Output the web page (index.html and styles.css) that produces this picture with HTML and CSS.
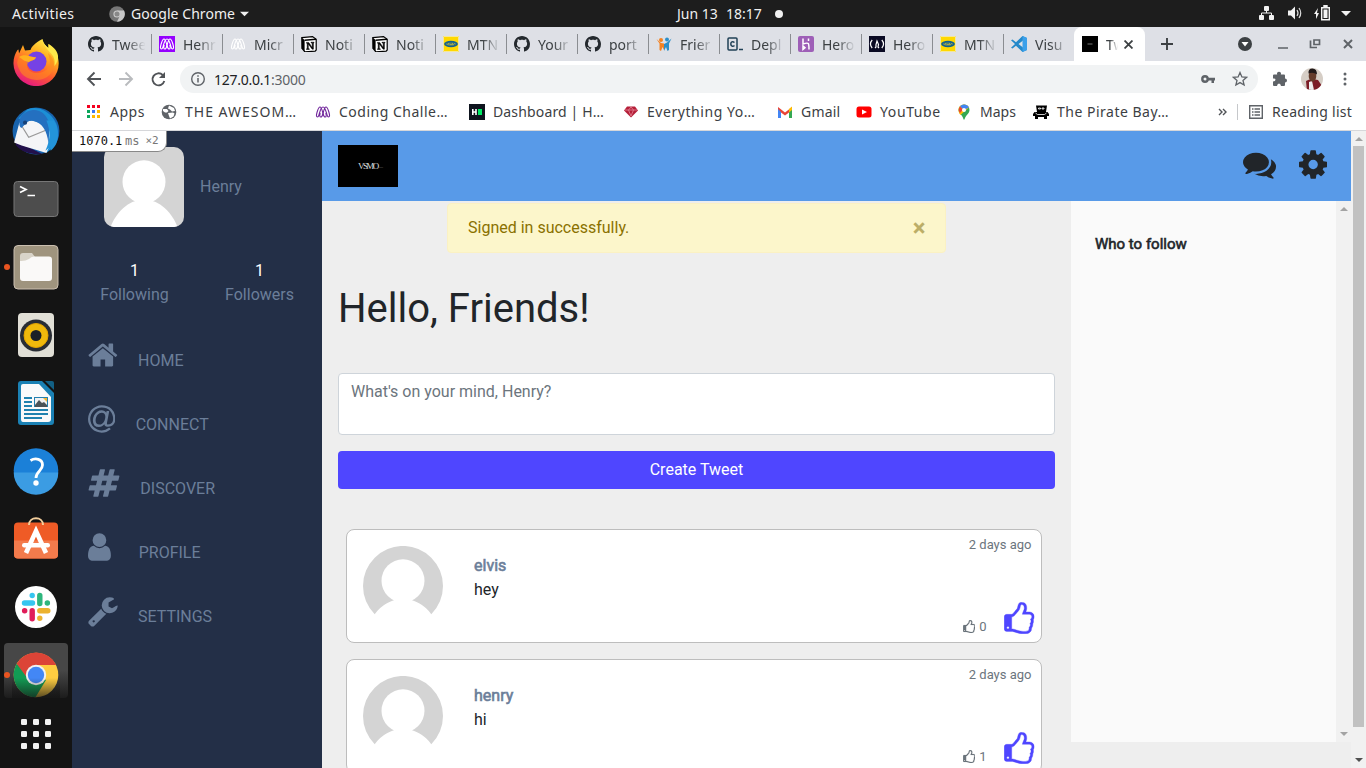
FILE: index.html
```html
<!DOCTYPE html>
<html lang="en">
<head>
<meta charset="utf-8">
<title>Tweets</title>
<link rel="stylesheet" href="styles.css">
</head>
<body>
<svg class="defs" aria-hidden="true">
  <symbol id="gh" viewBox="0 0 16 16"><path d="M8 0C3.58 0 0 3.58 0 8c0 3.54 2.29 6.53 5.47 7.59.4.07.55-.17.55-.38 0-.19-.01-.82-.01-1.49-2.01.37-2.53-.49-2.69-.94-.09-.23-.48-.94-.82-1.13-.28-.15-.68-.52-.01-.53.63-.01 1.08.58 1.23.82.72 1.21 1.87.87 2.33.66.07-.52.28-.87.51-1.07-1.78-.2-3.64-.89-3.64-3.95 0-.87.31-1.59.82-2.15-.08-.2-.36-1.02.08-2.12 0 0 .67-.21 2.2.82.64-.18 1.32-.27 2-.27s1.36.09 2 .27c1.53-1.04 2.2-.82 2.2-.82.44 1.1.16 1.92.08 2.12.51.56.82 1.27.82 2.15 0 3.07-1.87 3.75-3.65 3.95.29.25.54.73.54 1.48 0 1.07-.01 1.93-.01 2.2 0 .21.15.46.55.38A8.01 8.01 0 0 0 16 8c0-4.42-3.58-8-8-8z" fill="#24292e"/></symbol>
  <symbol id="micro" viewBox="0 0 16 16"><g fill="none" stroke="currentColor" stroke-width="1.100"><path d="M5 3C3.500 3 2.800 6 2 8.500c-.8 2.500-.8 4.500.5 4.500s1.300-1.500 2-4S6.300 3 8 3s2.800 3.500 3.500 6 .7 4 2 4 1.300-2 .5-4.500S12.500 3 11 3 8.800 6.500 8 9.500 7 13 5.800 13s-1.300-1.500-.6-4"/><path d="M5 3c1.500 0 2.200 3.500 3 6.500s1 3.500 2.200 3.500 1.300-1.500.6-4"/></g></symbol>
  <symbol id="notion" viewBox="0 0 16 16"><path d="M.8 1.600 11.500.6l3.700 2.600V14l-1 1.200-10.400.6L1 12.300z" fill="#fff" stroke="#000" stroke-width="1.200"/><path d="M.8 1.800 3.600 4v11.400L.8 12.300z"/><path d="M3.600 4.200 15 3.300" stroke="#000" stroke-width="1.400"/><path d="M5.500 6.400h2.200l3.500 5V7H10v-.8h3V7l-.6.200v6h-1.200L7.300 7.900v4.600l1 .3v.7H5.500v-.7l.7-.3V7.400l-.7-.2z" stroke="#000" stroke-width=".5"/></symbol>
  <symbol id="mtn" viewBox="0 0 16 16"><path fill="#ffd800" d="M0 0h16v16H0z"/><path fill="none" stroke="#f4e79a" d="M.5.5h15v15H.5z"/><ellipse cx="8" cy="8" rx="6.900" ry="3.300" fill="#12618f"/><ellipse cx="8" cy="8" rx="4.800" ry="1.300" fill="#e9c92a"/><path d="M4 8.800v-1.500l1.200 1 1.200-1v1.500M7 7.200h2m-1 0v1.600m2 0V7.200l2 1.600V7.200" stroke="#12618f" stroke-width=".8" fill="none"/></symbol>
  <symbol id="thumb" viewBox="-10 118 1556 1684" preserveAspectRatio="none"><path fill="currentColor" stroke="currentColor" stroke-width="18" d="M256 1472q0-26-19-45t-45-19-45 19-19 45 19 45 45 19 45-19 19-45zm1152-576q0-51-39-89.500t-89-38.500h-352q0-58 48-159.500t48-160.500q0-98-32-145t-128-47q-26 26-38 85t-30.500 125.500-59.500 109.500q-22 23-77 91-4 5-23 30t-31.500 41-34.500 42.500-40 44-38.500 35.500-40 27-35.500 9h-32v640h32q13 0 31.500 3t33 6.500 38 11 35 11.500 35.500 12.500 29 10.500q211 73 342 73h121q192 0 192-167 0-26-5-56 30-16 47.500-52.500t17.500-73.500-18-69q53-50 53-119 0-25-10-55.500t-25-47.500q32-1 53.500-47t21.500-81zm128-1q0 89-49 163 9 33 9 69 0 77-38 144 3 21 3 43 0 101-60 178 1 139-85 219.500t-227 80.500h-129q-96 0-189.500-22.500t-216.500-65.500q-116-40-138-40h-288q-53 0-90.500-37.500t-37.500-90.500v-640q0-53 37.500-90.500t90.500-37.500h274q36-24 137-155 58-75 107-128 24-25 35.500-85.500t30.500-126.500 62-108q39-37 90-37 84 0 151 32.500t102 101.500 35 186q0 93-48 192h176q104 0 180 76t76 179z"/></symbol>
  <symbol id="person" viewBox="0 0 80 80"><path fill="#d4d4d4" d="M0 0h80v80H0z"/><circle cx="40" cy="34.800" r="21.500" fill="#fff"/><path d="M6.500 80C14 61 28 52.500 40 52.500S66 61 73.500 80z" fill="#fff"/></symbol>
  <symbol id="person-round" viewBox="0 0 80 80"><path fill="#d4d4d4" d="M11.700 68.200A40 40 0 1 1 68.300 68.200Q58 54 40 52.500 22 54 11.700 68.200z"/><circle cx="40" cy="34.800" r="21.500" fill="#fff"/></symbol>
</svg>

<header class="topbar">
  <span class="activities">Activities</span>
  <svg class="appicon" viewBox="0 0 16 16"><circle cx="8" cy="8" r="7.800" fill="#777"/><path d="M8 4.500h7A7.800 7.800 0 0 1 8 15.800L11 9.500z" fill="#c8c8c8"/><circle cx="8" cy="8" r="3.600" fill="#ccc"/><circle cx="8" cy="8" r="2.500" fill="#888"/></svg>
  <span class="appname">Google Chrome</span>
  <svg class="caret" viewBox="0 0 10 6"><path d="M0 .5h10L5 5.500z" fill="#f0f0f0"/></svg>
  <span class="clock"><span>Jun 13</span><span>18:17</span><i class="dot"></i></span>
  <svg class="tray" viewBox="0 0 94 18" fill="#f2f2f2"><rect x="6" y="1" width="5" height="5" rx="1"/><rect x="1" y="10" width="5" height="5" rx="1"/><rect x="11" y="10" width="5" height="5" rx="1"/><path d="M8.500 5v3m-5 3V8h10v3" fill="none" stroke="#f2f2f2"/><path d="M30 5.500h3l4-4v13l-4-4h-3z"/><path d="M39 5q2 3 0 6m2-8q3.500 5 0 10" fill="none" stroke="#ddd" stroke-width="1.200"/><path d="M60 3l-4 6h2v5l3-6h-2z"/><path d="M63.700 2.700h7.600v12h-7.600zM66 .5h3V2h-3z" fill="none" stroke="#f2f2f2" stroke-width="1.400"/><path d="M65.500 4.500h4v8.500h-4zM83 6h10l-5 5z"/></svg>
</header>

<div class="desktop">
<nav class="dock">
  <div class="dock-item first"><svg viewBox="0 0 48 48"><defs><linearGradient id="ff" x1=".8" y1="0" x2=".3" y2="1"><stop offset="0" stop-color="#fff44f"/><stop offset=".35" stop-color="#ffab1f"/><stop offset=".65" stop-color="#ff5a2f"/><stop offset="1" stop-color="#e31587"/></linearGradient></defs><path d="M30.500 1c.5 4 3 6.500 6 9.500V6c7 6 10.200 12 10.200 19A22.600 22.600 0 0 1 1.500 26c-.2-6 1.500-10 4-14l1-.5.500 4L11 7l2 5.500 5.500-.5c1-3 4-7 12-11z" fill="url(#ff)"/><circle cx="24.500" cy="23.500" r="10" fill="#7542e5"/><path d="M7 19c3-3 7-2 10-1 3 1 5 1.500 7 1-1 4-5 3-7 5-5 5 1 11 8 11 8 0 13-5 13-12l-2-8c8 6 8 18-1 24S12 41 8 33 5 24 7 19z" fill="#ff8b20" opacity=".6"/><path d="M30.500 1c0 6 5 10 9 15s3 8 3 12c7-9 3-17-6-22v4C33 7.500 31 5 30.500 1z" fill="#ffe94a"/><path d="M7 19c3-2 7-2 10-1 3 1 5 1.500 7 1-1 4-5 3-7 5-4 0-8-4-10-5z" fill="#ffb01f"/></svg></div>
  <div class="dock-item"><svg class="tb" viewBox="0 0 48 48"><circle cx="24" cy="24" r="22.500" fill="#1863ad"/><path d="M7 12 16 3c8-3 17 0 23 7 8 8 8 22 1 30l-6 5c2-8-2-17-14-29z" fill="#1c8fd6"/><path d="M3 32 5 38c6 7 15 9 25 8L6 34z" fill="#22104b"/><path d="M8 16 20 14l18 5v17l-4 9C24 42 12 39 3 35z" fill="#f4f5f7"/><path d="m9 17 8 13 17-7" fill="none" stroke="#999" stroke-width="1.200"/><path d="M8 16c0-7 6-11 12-12 8-1 14 4 17 13l-1 22C36 28 32 18 24 15c-4-1-6-1-8 0l-6 6c-2-1-2-3-2-5z" fill="#2470c0"/><path d="M34 14c4 10 4 19-1 29l5-4v4c10-7 8-22 3-29z" fill="#2394da"/><circle cx="13.500" cy="16" r="2" fill="#164178"/></svg></div>
  <div class="dock-item"><svg viewBox="0 0 48 48"><rect x="2" y="6.500" width="44" height="35" rx="3.500" fill="#4d4d4d" stroke="#777"/><path d="m8 11.500 6 3-6 3M15.500 20.500h7.500" fill="none" stroke="#fff" stroke-width="1.700"/></svg></div>
  <div class="dock-item running"><svg viewBox="0 0 48 48"><rect x="2" y="2.500" width="44" height="43.500" rx="4" fill="#9f947e" stroke="#cbbfb0"/><path d="M8 13q0-3 3-3h9l3 4h14v7H8z" fill="#d9d4c9"/><path d="M8 18q5 .5 9-2 2-2.500 5-2.500h15q3 0 3 3V35q0 3-3 3H11q-3 0-3-3z" fill="#faf9f8"/></svg></div>
  <div class="dock-item"><svg viewBox="0 0 48 48"><rect x="6" y="2" width="36" height="44" rx="4" fill="#e1dfd6"/><circle cx="24" cy="24.500" r="16" fill="#292d34"/><circle cx="24" cy="24.500" r="12" fill="#f0b90c" stroke="#e4a400"/><circle cx="24" cy="24.500" r="5.500" fill="#1b2027"/></svg></div>
  <div class="dock-item"><svg viewBox="0 0 48 48"><path d="M9 2h21l12 12v29q0 3-3 3H9q-3 0-3-3V5q0-3 3-3z" fill="#1b81b4"/><path d="M33 2h7q2 0 2 2v7z" fill="#126085"/><path d="M11 5h16l12 13v22q0 3-3 3H11q-2 0-2-3V7q0-2 2-2z" fill="#fafafa"/><path d="M12 19h8m-8 4h8m-8 4h8m-8 4h24m-24 4h24m-24 4h18" stroke="#2082af" stroke-width="1.800"/><path fill="#2380b0" d="M22 18h14v10H22z"/><path fill="#f1f1f1" d="M23 19h12v8H23z"/><path d="m23 26 4-5 3 3 2-1 3 3v2H23z" fill="#4a5358"/><path fill="#f2b632" d="M31 19h4v4z"/></svg></div>
  <div class="dock-item"><svg viewBox="0 0 48 48"><circle cx="24" cy="23.500" r="22.300" fill="#1b80d8"/><path d="M1.700 25.500h44.600A22.300 22.300 0 0 1 1.700 25.500z" fill="#3b9ce3"/><path d="M18.500 13.500c5-3 12-1.500 12 4.500 0 6-6.500 6-6.500 13" stroke="#fff" stroke-width="2.800" fill="none"/><circle cx="24" cy="36" r="2.700" fill="#fff"/></svg></div>
  <div class="dock-item"><svg viewBox="0 0 48 48"><rect x="2" y="7.500" width="44" height="36" rx="4" fill="#ef5b26"/><path d="M2 25.500h44v14q0 4-4 4H6q-4 0-4-4z" fill="#f37b4c"/><path d="M17 10c0-9 14-9 14 0" fill="none" stroke="#f4ce9b" stroke-width="2"/><path d="m14 38 10-22 10 22" fill="none" stroke="#fff" stroke-width="4.600"/><rect x="10" y="28" width="28" height="4.500" rx="2.200" fill="#fff"/></svg></div>
  <div class="dock-item"><svg viewBox="0 0 48 48"><circle cx="24" cy="24" r="21" fill="#fff"/><g stroke-width="5.400" stroke-linecap="round"><path stroke="#36c5f0" d="M12.500 20h8M20.200 12.500v.1"/><path stroke="#2eb67d" d="M27.800 12.500v8M35.300 20h.1"/><path stroke="#ecb22e" d="M27.800 27.700h8M27.800 35.200v.1"/><path stroke="#e01e5a" d="M20.200 27.700v8M12.600 27.700h.1"/></g></svg></div>
  <div class="dock-item running active"><svg viewBox="0 0 48 48"><circle cx="24" cy="24" r="22.300" fill="#ffcd41"/><path d="M24 24 4.700 12.800A22.300 22.300 0 0 0 23.500 46.300L34 29z" fill="#129c54"/><path d="M4.700 12.800A22.300 22.300 0 0 1 44.200 14H24l-8 14z" fill="#dc4437"/><circle cx="24" cy="24" r="10.200" fill="#f1f1f1"/><circle cx="24" cy="24" r="8.200" fill="#4387f5"/><path d="M0 27h48v21H0z" fill="url(#shade)"/><defs><linearGradient id="shade" x2="0" y2="1"><stop stop-color="#141414" stop-opacity="0"/><stop offset="1" stop-color="#141414" stop-opacity=".75"/></linearGradient></defs></svg></div>
  <div class="dock-item apps"><svg viewBox="0 0 48 48" fill="#f3f3f3"><rect x="9" y="9" width="6" height="6" rx="1.300"/><rect x="21" y="9" width="6" height="6" rx="1.300"/><rect x="33" y="9" width="6" height="6" rx="1.300"/><rect x="9" y="21" width="6" height="6" rx="1.300"/><rect x="21" y="21" width="6" height="6" rx="1.300"/><rect x="33" y="21" width="6" height="6" rx="1.300"/><rect x="9" y="33" width="6" height="6" rx="1.300"/><rect x="21" y="33" width="6" height="6" rx="1.300"/><rect x="33" y="33" width="6" height="6" rx="1.300"/></svg></div>
</nav>

<main class="browser">
  <div class="tabs">
    <div class="tab"><svg><use href="#gh"/></svg><span>Twee</span></div>
    <div class="tab"><svg class="purple-bg"><use href="#micro"/></svg><span>Henr</span></div>
    <div class="tab"><svg class="pale"><use href="#micro"/></svg><span>Micr</span></div>
    <div class="tab"><svg><use href="#notion"/></svg><span>Noti</span></div>
    <div class="tab"><svg><use href="#notion"/></svg><span>Noti</span></div>
    <div class="tab"><svg><use href="#mtn"/></svg><span>MTN</span></div>
    <div class="tab"><svg><use href="#gh"/></svg><span>Your</span></div>
    <div class="tab"><svg><use href="#gh"/></svg><span>port</span></div>
    <div class="tab"><svg viewBox="0 0 16 16"><circle cx="5" cy="4" r="2" fill="#f58220"/><circle cx="11" cy="3.500" r="2" fill="#2d8fc8"/><path d="m.5 3 3 4.500V14L5 15l1.500-4L8 14V7.500L5 7z" fill="#f58220"/><path d="m15.500 2.500-2.500 5V14l-1.500 1-1.500-4-2 4V8l3-1.500z" fill="#2d8fc8"/></svg><span>Frier</span></div>
    <div class="tab"><svg viewBox="0 0 16 16" fill="none" stroke="#204056" stroke-width="1.500"><rect x="1" y="2" width="9" height="12" rx="1"/><path d="M7.500 6.500C5.500 5 3.800 6 3.800 8s2 3 3.700 1.500M12 13.500h4"/></svg><span>Depl</span></div>
    <div class="tab"><svg viewBox="0 0 16 16"><rect width="16" height="16" rx="2" fill="#9e5fb7"/><path d="M5 2.500v5.500c6-2 6-1 6 5.500M10.500 5V2.500M5 10v3.500l2-1.700z" fill="none" stroke="#fff" stroke-width="1.500"/></svg><span>Hero</span></div>
    <div class="tab"><svg viewBox="0 0 16 16"><path fill="#0a0a23" d="M0 0h16v16H0z"/><path d="M3.200 4q-3.500 4 0 8M12.800 4q3.500 4 0 8M6 12l1-1V8.500L8 5l1.500 3.500L9 11l1 1" stroke="#fff" fill="none" stroke-width="1.200"/></svg><span>Hero</span></div>
    <div class="tab"><svg><use href="#mtn"/></svg><span>MTN</span></div>
    <div class="tab last"><svg viewBox="0 0 16 16"><path d="M11.500 0 16 2v12l-4.500 2L5 9.800 1.500 12.500 0 11.700 4 8 0 4.300l1.500-.8L5 6.200zM12 4.500 7.500 8l4.500 3.500z" fill="#2489ca"/><path d="M11.500 0 16 2v12l-4.500 2z" fill="#3ba0ea"/></svg><span>Visu</span></div>
    <div class="tab current"><svg viewBox="0 0 16 16"><path d="M0 0h16v16H0z"/><path d="M5.500 8h5" stroke="#777"/></svg><span>Tw</span><svg class="close" viewBox="0 0 8 8"><path d="m.5.5 7 7m0-7-7 7" stroke="#3c4043" stroke-width="1.600"/></svg></div>
    <svg class="plus" viewBox="0 0 12 12"><path d="M0 6h12M6 0v12" stroke="#3c4043" stroke-width="1.900"/></svg>
    <svg class="winctl" viewBox="0 0 116 16"><circle cx="7" cy="8" r="7" fill="#3c4043"/><path d="M3.500 6h7L7 10.500z" fill="#fff"/><path d="M40 12h10M72.500 4.500v7h6.500" stroke="#5f6368" stroke-width="1.700" fill="none"/><path d="M76 4h5.500v4.500H76z" stroke="#5f6368" stroke-width="1.700" fill="none"/><path d="m106 4 8 8m0-8-8 8" stroke="#5f6368" stroke-width="2"/></svg>
  </div>
  <div class="toolbar">
    <svg class="navicons" viewBox="0 0 80 16" fill="none" stroke-width="1.900"><path d="M15 8H2m6.500-6.500L2 8l6.500 6.500" stroke="#505357"/><path d="M33 8h13m-6.500-6.500L46 8l-6.500 6.500" stroke="#b9bbbe"/><path d="M78.300 10A6 6 0 1 1 76.700 4" stroke="#505357"/><path d="M79 1v6h-6z" fill="#505357"/></svg>
    <div class="address">
      <svg viewBox="0 0 16 16"><circle cx="8" cy="8" r="6.300" fill="none" stroke="#5f6368" stroke-width="1.400"/><path d="M8 7v4.500M8 4.300v1.500" stroke="#5f6368" stroke-width="1.500"/></svg>
      <span class="url">127.0.0.1<em>:3000</em></span>
      <svg class="key" viewBox="0 0 14 8"><circle cx="4" cy="4" r="2.700" fill="none" stroke="#5f6368" stroke-width="2.400"/><path d="M7 2.800h7v2.600h-1V8h-2.500V5.400H7z" fill="#5f6368"/></svg>
      <svg class="star" viewBox="0 0 16 16"><path d="m8 1.500 1.900 4.400 4.700.4L11 9.400l1.100 4.600L8 11.600 3.900 14 5 9.400 1.400 6.300l4.700-.4z" fill="none" stroke="#5f6368" stroke-width="1.300"/></svg>
    </div>
    <svg class="ext" viewBox="0 0 16 16"><path d="M1 4.500q0-1 1-1h3.200a2 2 0 1 1 3.600 0H12q1 0 1 1v3a2 2 0 1 1 0 4v2.500q0 1-1 1H9q-.3-2.500-2-2.500T5 15H2q-1 0-1-1v-3.500q2.500-.2 2.500-1.800T1 7.500z" fill="#5f6368"/></svg>
    <svg class="face" viewBox="0 0 22 22"><clipPath id="fc"><circle cx="11" cy="11" r="11"/></clipPath><g clip-path="url(#fc)"><path fill="#d6cec6" d="M0 0h22v22H0z"/><path d="M5 13q4-3 12-1l4 6-3 5H6z" fill="#7c1d27"/><path d="m8 14 3-1 2 9H8z" fill="#eee"/><ellipse cx="11.500" cy="8" rx="3.800" ry="5.500" fill="#653c2b"/><path d="M7.500 5.500q-.5-5 4-5t4.500 6q-4-3-8.500-1z" fill="#211a1a"/></g></svg>
    <svg class="more" viewBox="0 0 4 14" fill="#5f6368"><circle cx="2" cy="2" r="1.500"/><circle cx="2" cy="7" r="1.500"/><circle cx="2" cy="12" r="1.500"/></svg>
  </div>
  <div class="bookmarks">
    <div class="bm w75"><svg viewBox="0 0 16 16"><path fill="#f4001f" d="M1 1h3v3H1zm5 0h3v3H6zm5 0h3v3h-3z"/><path fill="#0aa65b" d="M1 6h3v3H1zm0 5h3v3H1z"/><path fill="#3b78f5" d="M6 6h3v3H6z"/><path fill="#ffb800" d="M11 6h3v3h-3zm-5 5h3v3H6zm5 0h3v3h-3z"/></svg><span class="t-apps">Apps</span></div>
    <div class="bm w154"><svg viewBox="0 0 16 16"><circle cx="8" cy="8" r="7.300" fill="#5f6368"/><path d="M2 5h4l1.500 2L6 8.500H4L2 7zm5 4 5-.500 1.500 1-1 3-3.500 2-1-2.500zM8 1.500l5 2.500 1 3-3 .5-2-2-2-1z" fill="#fff"/></svg><span class="t-awe">THE AWESOM…</span></div>
    <div class="bm w154"><svg class="micro"><use href="#micro"/></svg><span class="t-cod">Coding Challe…</span></div>
    <div class="bm w154"><svg viewBox="0 0 16 16"><path fill="#0e141e" d="M0 0h16v16H0z"/><path d="M3.800 5v6M7 5v6M3.500 8H7" stroke="#fff" stroke-width="1.600"/><path fill="#00ea64" d="M9 5h4v6H9z"/></svg><span class="t-dash">Dashboard | H…</span></div>
    <div class="bm w154"><svg viewBox="0 0 16 16"><path d="M4 2.500h8l3 4-7 7-7-7z" fill="#b51f39"/><path d="M2 6h12M5.500 6 8 12l2.500-6L8 3z" stroke="#e58494" stroke-width=".8" fill="none"/></svg><span class="t-eve">Everything Yo…</span></div>
    <div class="bm w79"><svg viewBox="0 0 16 16"><path d="M1 14V3l7 5.500L15 3v11h-3V8.500L8 11.500 4 8.500V14z" fill="#ea4335"/><path fill="#4285f4" d="M1 5l3 3v6H1z"/><path fill="#34a853" d="m15 5-3 3v6h3z"/><path fill="#fbbc04" d="m12 5 3-2.500V6l-3 2.500z"/></svg><span class="t-gm">Gmail</span></div>
    <div class="bm w100"><svg viewBox="0 0 16 16"><rect x=".5" y="2.500" width="15" height="11" rx="2.500" fill="#f00"/><path d="m6 5.500 5 2.500-5 2.500z" fill="#fff"/></svg><span class="t-you">YouTube</span></div>
    <div class="bm w77"><svg viewBox="0 0 16 16"><path d="M8 .5a5.500 5.500 0 0 1 5.500 5.500c0 4-4 5-5 9.500h-1C7 11 2.500 10 2.500 6A5.500 5.500 0 0 1 8 .5z" fill="#34a853"/><path d="M2.500 6A5.500 5.500 0 0 1 8 .5q3.500 0 5 3L4.500 11Q2.500 9 2.500 6z" fill="#fbbc04"/><path d="M13 3.500 8 6l-4-3.500Q5.500.5 8 .5q3.500 0 5 3z" fill="#4285f4"/><path d="m4 2.500 3 3L4 9Q1.500 6 4 2.500z" fill="#ea4335"/><circle cx="8" cy="6" r="2" fill="#fff"/></svg><span>Maps</span></div>
    <div class="bm w190"><svg viewBox="0 0 16 16"><path d="M3 1.500h11l-1 6.500h1.500l1.500 2v2h-2v3h-3v-2H5v2H2v-3H0v-2l1.500-2H4z"/><path d="M5.500 4h2v1h-2zm3.500 0h2v1H9zM2.500 9l2 1.500h7l2-1.500" fill="none" stroke="#fff" stroke-width=".8"/></svg><span class="t-pir">The Pirate Bay…</span></div>
    <svg class="chev" viewBox="0 0 9 8"><path d="m1 1 3 3-3 3m4-6 3 3-3 3" fill="none" stroke="#505357" stroke-width="1.400"/></svg>
    <i class="bmsep"></i>
    <div class="bm"><svg viewBox="0 0 16 16" fill="none" stroke="#5f6368" stroke-width="1.400"><path d="M1.700 1.700h12.600v12.600H1.700zM4 5h1.500m1 0H12M4 8h1.500m1 0H12M4 11h1.500m1 0H12"/></svg><span class="t-read">Reading list</span></div>
  </div>

  <div class="page">
    <div class="timing"><b>1070.1</b><span>ms</span><span class="times">×2</span></div>
    <aside class="sidebar">
      <div class="profile"><svg class="avatar"><use href="#person"/></svg><span>Henry</span></div>
      <div class="counts"><div><b>1</b><span>Following</span></div><div><b>1</b><span>Followers</span></div></div>
      <ul class="menu">
        <li><svg class="w-home" viewBox="64 0 1664 1792"><path d="M1472 992v480q0 26-19 45t-45 19h-384v-384h-256v384h-384q-26 0-45-19t-19-45v-480q0-1 .5-3t.5-3l575-474 575 474q1 2 1 6zm223-69l-62 74q-8 9-21 11h-3q-13 0-21-7l-692-577-692 577q-12 8-24 7-13-2-21-11l-62-74q-8-10-7-23.500t11-21.500l719-599q32-26 76-26t76 26l244 204v-195q0-14 9-23t23-9h192q14 0 23 9t9 23v408l219 182q10 8 11 21.500t-7 23.500z"/></svg>HOME</li>
        <li><svg class="w-at" viewBox="0 -128 1536 1792"><path d="M972 647q0-108-53.500-169t-147.500-61q-63 0-124 30.500t-110 84.500-79.500 137-30.500 180q0 112 53.500 173t150.500 61q96 0 176-66.500t122.500-166 42.500-203.500zm564 121q0 111-37 197t-98.500 135-131.500 74.500-145 27.500q-6 0-15.500.5t-16.500.5q-95 0-142-53-28-33-33-83-52 66-131.500 110t-173.500 44q-161 0-249.500-95.500t-88.500-269.500q0-157 66-290t179-210.500 246-77.500q87 0 155 35.500t106 99.500l2-19 11-56q1-6 5.500-12t9.500-6h118q5 0 13 11 5 5 3 16l-120 614q-5 24-5 48 0 39 12.500 52t44.500 13q28-1 57-5.500t73-24 77-50 57-89.500 24-137q0-292-174-466t-466-174q-130 0-248.500 51t-204 136.500-136.500 204-51 248.500 51 248.500 136.500 204 204 136.500 248.500 51q228 0 405-144 11-9 24-8t21 12l41 49q8 12 7 24-2 13-12 22-102 83-227.500 128t-258.500 45q-156 0-298-61t-245-164-164-245-61-298 61-298 164-245 245-164 298-61q344 0 556 212t212 556z"/></svg>CONNECT</li>
        <li><svg class="w-hash" viewBox="0 0 1792 1792"><path d="M991 1024l64-256h-254l-64 256h254zm768-504l-56 224q-7 24-31 24h-327l-64 256h311q15 0 25 12 10 14 6 28l-56 224q-5 24-31 24h-327l-81 328q-7 24-31 24h-224q-16 0-26-12-9-12-6-28l78-312h-254l-81 328q-7 24-31 24h-225q-15 0-25-12-9-12-6-28l78-312h-311q-15 0-25-12-9-12-6-28l56-224q7-24 31-24h327l64-256h-311q-15 0-25-12-10-14-6-28l56-224q5-24 31-24h327l81-328q7-24 32-24h224q15 0 25 12 9 12 6 28l-78 312h254l81-328q7-24 32-24h224q15 0 25 12 9 12 6 28l-78 312h311q15 0 25 12 9 12 6 28z"/></svg>DISCOVER</li>
        <li><svg class="w-user" viewBox="256 0 1280 1792"><path d="M1536 1399q0 109-62.500 187t-150.500 78h-854q-88 0-150.500-78t-62.500-187q0-85 8.500-160.500t31.500-152 58.500-131 94-89 134.500-34.500q131 128 313 128t313-128q76 0 134.500 34.500t94 89 58.500 131 31.500 152 8.500 160.500zm-256-887q0 159-112.500 271.500t-271.500 112.500-271.500-112.500-112.500-271.500 112.500-271.500 271.500-112.500 271.500 112.500 112.500 271.500z"/></svg>PROFILE</li>
        <li><svg class="w-home" viewBox="64 0 1664 1792"><path d="M448 1472q0-26-19-45t-45-19-45 19-19 45 19 45 45 19 45-19 19-45zm644-420l-682 682q-37 37-90 37-52 0-91-37l-106-108q-38-36-38-90 0-53 38-91l681-681q39 98 114.500 173.500t173.500 114.500zm634-435q0 39-23 106-47 134-164.500 217.500t-258.500 83.500q-185 0-316.500-131.500t-131.500-316.500 131.500-316.500 316.500-131.500q58 0 121.500 16.500t107.500 46.500q16 11 16 28t-16 28l-293 169v224l193 107q5-3 79-48.500t135.500-81 70.500-35.500q15 0 23.500 10t8.500 25z"/></svg>SETTINGS</li>
      </ul>
    </aside>
    <section class="content">
      <header class="sitebar">
        <div class="logo">VSMO<i>–</i></div>
        <svg class="chat" viewBox="0 0 1792 1792"><path d="M1408 768q0 139-94 257t-256.500 186.500-353.500 68.500q-86 0-176-16-124 88-278 128-36 9-86 16h-3q-11 0-20.500-8t-11.500-21q-1-3-1-6.500t.5-6.500 2-6l2.500-5 3.500-5.500 4-5 4.500-5 4-4.500q5-6 23-25t26-29.500 22.500-29 25-38.500 20.500-44q-124-72-195-177t-71-224q0-139 94-257t256.500-186.500 353.500-68.500 353.500 68.500 256.500 186.500 94 257zm384 256q0 120-71 224.500t-195 176.500q10 24 20.500 44t25 38.500 22.500 29 26 29.500 23 25q1 1 4 4.500t4.500 5 4 5 3.500 5.500l2.500 5 2 6 .5 6.500-1 6.500q-3 14-13 22t-22 7q-50-7-86-16-154-40-278-128-90 16-176 16-271 0-472-132 58 4 88 4 161 0 309-45t264-129q125-92 192-212t67-254q0-77-23-152 129 71 204 178t75 230z"/></svg>
        <svg class="cog" viewBox="128 0 1536 1792"><path d="M1152 896q0-106-75-181t-181-75-181 75-75 181 75 181 181 75 181-75 75-181zm512-109v222q0 12-8 23t-20 13l-185 28q-19 54-39 91 35 50 107 138 10 12 10 25t-9 23q-27 37-99 108t-94 71q-12 0-26-9l-138-108q-44 23-91 38-16 136-29 186-7 28-36 28h-222q-14 0-24.500-8.500t-11.500-21.500l-28-184q-49-16-90-37l-141 107q-10 9-25 9-14 0-25-11-126-114-165-168-7-10-7-23 0-12 8-23 15-21 51-66.500t54-70.500q-27-50-41-99l-183-27q-13-2-21-12.500t-8-23.500v-222q0-12 8-23t19-13l186-28q14-46 39-92-40-57-107-138-10-12-10-24 0-10 9-23 26-36 98.500-107.500t94.500-71.500q13 0 26 10l138 107q44-23 91-38 16-136 29-186 7-28 36-28h222q14 0 24.500 8.500t11.500 21.500l28 184q49 16 90 37l142-107q9-9 24-9 13 0 25 10 129 119 165 170 7 8 7 22 0 12-8 23-15 21-51 66.500t-54 70.500q26 50 41 98l183 28q13 2 21 12.500t8 23.500z"/></svg>
      </header>
      <div class="columns">
        <div class="feed">
          <div class="alert"><span>Signed in successfully.</span><span class="dismiss">×</span></div>
          <h1>Hello, Friends!</h1>
          <div class="compose">What's on your mind, Henry?</div>
          <div class="submit">Create Tweet</div>
          <article class="tweet"><svg class="round"><use href="#person-round"/></svg><div class="body"><strong>elvis</strong><p>hey</p></div><div class="meta"><time>2 days ago</time><div class="likes"><svg class="small"><use href="#thumb"/></svg><span>0</span><svg class="big"><use href="#thumb"/></svg></div></div></article>
          <article class="tweet"><svg class="round"><use href="#person-round"/></svg><div class="body"><strong>henry</strong><p>hi</p></div><div class="meta"><time>2 days ago</time><div class="likes"><svg class="small"><use href="#thumb"/></svg><span>1</span><svg class="big"><use href="#thumb"/></svg></div></div></article>
        </div>
        <div class="follow"><h2>Who to follow</h2><div class="scroll"><i class="up"></i><i class="down"></i></div></div>
      </div>
    </section>
    <div class="scroll outer"><i class="up"></i><i class="track"></i><i class="down dark"></i></div>
  </div>
</main>
</div>
</body>
</html>
```
FILE: styles.css
```css
* { box-sizing: border-box; }
body { margin: 0; width: 1366px; height: 768px; overflow: hidden; background: #141414; font-family: "Noto Sans", "Open Sans", sans-serif; font-size: 14px; color: #3c4043; }
svg { display: block; flex: none; }
.defs { position: absolute; width: 0; height: 0; }
i, em { font-style: normal; }
h1, h2, p, ul { margin: 0; padding: 0; }

.topbar { height: 27px; background: #1d1d1d; color: #f0f0f0; display: grid; grid-template-columns: 97px 22px auto 20px 1fr auto; align-items: center; padding: 0 14px 0 12px; white-space: nowrap; }
.activities { letter-spacing: .4px; }
.appicon { width: 16px; height: 16px; }
.appname { width: 106px; letter-spacing: .05px; }
.caret { width: 9px; height: 6px; margin-left: 3px; }
.clock { display: flex; align-items: center; margin-left: 420px; }
.clock span { width: 49px; letter-spacing: 0; }
.dot { width: 8px; height: 8px; border-radius: 50%; background: #f0f0f0; }
.tray { width: 94px; height: 18px; margin-top: 0; }

.desktop { display: flex; height: 741px; }
.dock { width: 72px; padding-top: 2px; background: #141414; display: flex; flex-direction: column; }
.dock-item { height: 68px; display: flex; align-items: center; justify-content: center; position: relative; flex: none; }
.dock-item svg { width: 48px; height: 48px; }
.dock-item.first svg { margin-bottom: 3px; }
.dock-item svg.tb { width: 50px; height: 50px; }
.dock-item.apps { height: 50px; }
.dock-item.running::before { content: ""; position: absolute; left: 4px; top: 31px; width: 6px; height: 6px; border-radius: 50%; background: #e95420; z-index: 2; }
.dock-item.active::after { content: ""; position: absolute; left: 4px; right: 4px; top: 2px; height: 55px; border-radius: 4px; background: linear-gradient(#474747 50%, #1c1c1c); }
.dock-item.active svg { position: relative; z-index: 1; }

.browser { flex: 1; display: flex; flex-direction: column; background: #fff; min-width: 0; }
.tabs { height: 34px; background: #dee0e6; display: flex; align-items: center; padding-left: 9px; flex: none; }
.tab { width: 71px; height: 20px; padding-left: 7px; display: flex; align-items: center; gap: 8px; border-right: 1px solid #8a8d91; flex: none; }
.tab svg { width: 16px; height: 16px; }
.tab span { width: 38px; margin-right: -8px; white-space: nowrap; -webkit-mask-image: linear-gradient(90deg, #000 40%, transparent 88%); mask-image: linear-gradient(90deg, #000 40%, transparent 88%); }
.tab.last { border: 0; width: 70px; }
.purple-bg { background: #9500ff; color: #fff; }
.pale { color: #fff; }
.tab.current { height: 34px; background: #fff; border: 0; border-radius: 8px 8px 0 0; padding-left: 8px; }
.tab.current span { width: 20px; margin-right: -10px; -webkit-mask-image: linear-gradient(90deg, #000 20%, transparent 60%); mask-image: linear-gradient(90deg, #000 20%, transparent 60%); }
.tab.current svg.close { width: 9px; height: 9px; }
.plus { width: 12px; height: 12px; margin-left: 16px; }
.winctl { width: 116px; height: 16px; margin-left: 65px; }
.toolbar { height: 36px; display: flex; align-items: center; flex: none; }
.navicons { width: 80px; height: 16px; margin-left: 14px; }
.address { margin-left: 14px; width: 1078px; height: 28px; border-radius: 14px; background: #f1f3f4; display: flex; align-items: center; padding: 0 10px; }
.address svg { width: 16px; height: 16px; }
.url { margin-left: 8px; flex: 1; color: #202124; letter-spacing: -.25px; }
.url em { color: #5f6368; }
.address svg.key { width: 14px; height: 8px; margin-right: 17px; }
.ext { width: 16px; height: 16px; margin-left: 14px; }
.face { width: 22px; height: 22px; margin-left: 13px; }
.more { width: 4px; height: 14px; margin-left: 20px; }
.bookmarks { height: 34px; padding: 0 0 4px 14px; border-bottom: 1px solid #d6d7da; display: flex; align-items: center; flex: none; white-space: nowrap; }
.bm { display: flex; align-items: center; gap: 8px; flex: none; }
.bm svg { width: 16px; height: 16px; }
.bm .micro { color: #72279c; }
.w75 { width: 75px; } .w154 { width: 154px; } .w79 { width: 79px; } .w100 { width: 100px; } .w77 { width: 77px; } .w190 { width: 185px; }
.t-apps { letter-spacing: .5px; } .t-awe { letter-spacing: 1px; } .t-cod { letter-spacing: .5px; } .t-dash { letter-spacing: .15px; } .t-eve { letter-spacing: .55px; } .t-gm { letter-spacing: .2px; } .t-you { letter-spacing: .6px; } .t-pir { letter-spacing: .5px; } .t-read { letter-spacing: .3px; }
.chev { width: 9px; height: 8px; }
.bmsep { width: 1px; height: 16px; background: #c6c8cb; margin: 0 10px; }

.page { flex: 1; display: flex; position: relative; background: #eeeeee; min-height: 0; font: 16px/24px Roboto, sans-serif; color: #212529; }
.timing { position: absolute; left: 0; top: 0; z-index: 3; height: 21px; width: 95px; background: #fff; border: 1px solid #888; border-width: 0 1px 1px 0; border-radius: 0 0 9px 0; font: 12px/20px "DejaVu Sans Mono", monospace; padding-left: 7px; display: flex; color: #777; }
.timing b { font-weight: 400; color: #111; width: 46px; }
.timing .times { font-size: 11px; margin-left: 6px; }
.sidebar { width: 250px; background: #232f47; color: #6b7e99; flex: none; }
.profile { display: flex; align-items: center; gap: 16px; padding: 16px 0 0 32px; }
.avatar { width: 80px; height: 80px; border-radius: 10px; overflow: hidden; }
.counts { display: grid; grid-template-columns: 125px 125px; margin-top: 32px; text-align: center; }
.counts div { display: flex; flex-direction: column; }
.counts b { font-weight: 400; color: #fff; }
.menu { list-style: none; margin-top: 2px; padding-left: 16px; }
.menu li { height: 64px; display: flex; align-items: flex-end; gap: 20.300px; }
.menu svg { height: 32px; margin-bottom: 2.400px; fill: #6b7e99; }
.w-home { width: 29.700px; } .w-at { width: 27.400px; } .w-hash { width: 32px; }
.menu .w-user { width: 22.900px; margin-right: 7.500px; }
.content { width: 1029px; display: flex; flex-direction: column; min-height: 0; }
.sitebar { height: 70px; flex: none; background: #589ae8; display: flex; align-items: center; padding: 0 24px 0 16px; }
.logo { width: 60px; height: 42px; background: #000; color: #ddd; font: 9px/43px "Liberation Serif", serif; letter-spacing: -1.600px; padding-left: 20px; margin-right: auto; }
.logo i { color: #555; margin-left: 1px; }
.chat { width: 33px; height: 33px; margin: 0 22.500px 2.500px 0; fill: #212529; }
.cog { width: 28.300px; height: 33px; margin-bottom: 3px; fill: #212529; }
.columns { display: flex; flex: 1; min-height: 0; }
.feed { width: 749px; padding: 2px 16px 0; overflow: hidden; }
.alert { width: 499px; height: 50px; margin: 0 auto; background: #fcf6cb; border: 1px solid #fbf1c3; border-radius: 4px; color: #8a7100; display: flex; justify-content: space-between; align-items: center; padding: 0 19.500px 0 20px; }
.dismiss { font-size: 24px; font-weight: 700; color: #bcae67; }
h1 { font-size: 40px; font-weight: 400; line-height: 48px; margin: 32px 0 40px; }
.compose { height: 62px; border: 1px solid #ced4da; border-radius: 4px; background: #fff; color: #6c757d; padding: 6px 12px; }
.submit { height: 38px; margin: 16px 0 40px; border-radius: 4px; background: #4f46ff; color: #fff; text-align: center; line-height: 38px; }
.tweet { height: 114px; width: 696px; margin: 0 0 16px 8px; padding-left: 16px; background: #fff; border: 1px solid #bdbdbd; border-radius: 8px; display: flex; }
.round { width: 80px; height: 80px; margin-top: 16px; }
.body { margin-left: 31px; padding-top: 24px; flex: 1; }
.body strong { display: block; font-weight: 400; color: #6b7e99; -webkit-text-stroke: .6px #6b7e99; }
.meta { display: flex; flex-direction: column; justify-content: space-between; align-items: flex-end; padding: 5px 6.500px 8px 0; font-size: 13px; line-height: 20px; color: #6c757d; }
.meta time { margin-right: 3px; }
.likes { display: flex; align-items: flex-end; }
.likes span { margin: 0 17.500px -3px 4px; }
.small { width: 12.500px; height: 13px; margin-bottom: 1.500px; }
.big { width: 30.500px; height: 32px; color: #4f46ff; }
.follow { width: 280px; height: 541px; background: #fafafa; display: flex; justify-content: space-between; }
.follow h2 { font-size: 15px; font-weight: 400; line-height: 24px; padding: 31px 0 0 24px; -webkit-text-stroke: .6px #212529; }
.scroll { width: 15px; background: #f1f1f1; display: flex; flex-direction: column; justify-content: space-between; align-items: center; padding: 6px 0; flex: none; }
.up, .down { border: 4px solid transparent; border-bottom-color: #a3a3a3; border-top: 0; }
.down { border-top: 4px solid #a3a3a3; border-bottom: 0; }
.down.dark { border-top-color: #505050; }
.track { width: 11px; height: 581px; background: #c1c1c1; margin: 5px 0 auto; }
```
